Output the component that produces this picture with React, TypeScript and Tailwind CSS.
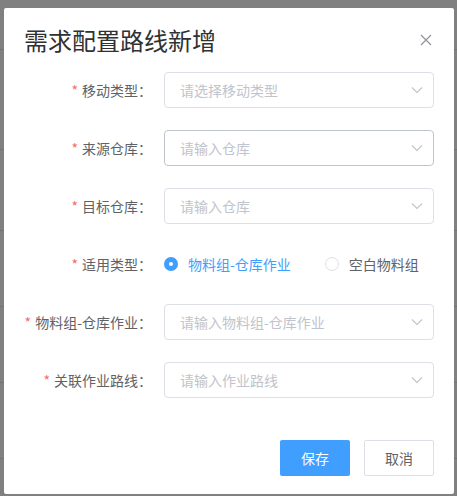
import React from "react";

const font = { fontFamily: '"Noto Sans CJK SC", "Noto Sans", sans-serif' };

function Chevron() {
  return (
    <svg width="12" height="8" viewBox="0 0 12 8" fill="none">
      <path d="M1 1.5 L6 6.5 L11 1.5" stroke="#c0c4cc" strokeWidth="1.1" />
    </svg>
  );
}

function Label({ text }: { text: string }) {
  return (
    <div className="w-[160px] shrink-0 pr-3 text-right text-[14px] leading-[36px] text-[#606266]">
      <span className="mr-[4px] text-[#f56c6c]">*</span>
      {text}：
    </div>
  );
}

function SelectRow({ label, placeholder, hover }: { label: string; placeholder: string; hover?: boolean }) {
  return (
    <div className="flex items-center">
      <Label text={label} />
      <div
        className={`flex h-[36px] w-[270px] items-center justify-between rounded-[4px] border bg-white pl-[15px] pr-[10px] ${
          hover ? "border-[#c0c4cc]" : "border-[#dcdfe6]"
        }`}
      >
        <span className="text-[14px] text-[#c0c4cc]">{placeholder}</span>
        <Chevron />
      </div>
    </div>
  );
}

export default function App() {
  return (
    <div className="relative h-[496px] w-[457px] overflow-hidden bg-[#808080]" style={font}>
      <div className="absolute inset-0 flex flex-col">
        <div className="mt-[49px] h-px bg-[#737373]" />
        <div className="mt-[99px] h-px bg-[#737373]" />
        <div className="mt-[80px] h-px bg-[#737373]" />
        <div className="mt-[75px] h-px bg-[#737373]" />
        <div className="mt-[75px] h-px bg-[#737373]" />
        <div className="mt-[75px] h-px bg-[#737373]" />
      </div>
      <div className="absolute left-[4px] top-[8px] h-[486px] w-[450px] rounded-[2px] bg-white">
        <div className="pl-[20px] pt-[18px] text-[24px] leading-[28px] text-[#303133]">需求配置路线新增</div>
        <div className="absolute right-[22px] top-[26px] text-[#909399]">
          <svg width="12" height="12" viewBox="0 0 12 12">
            <path d="M1 1 L11 11 M11 1 L1 11" stroke="#909399" strokeWidth="1.2" />
          </svg>
        </div>
        <div className="mt-[18px] flex flex-col gap-[22px]">
          <SelectRow label="移动类型" placeholder="请选择移动类型" />
          <SelectRow label="来源仓库" placeholder="请输入仓库" hover />
          <SelectRow label="目标仓库" placeholder="请输入仓库" />
          <div className="flex items-center">
            <Label text="适用类型" />
            <div className="flex items-center">
              <span className="flex h-[14px] w-[14px] items-center justify-center rounded-full bg-[#409eff]">
                <span className="h-[4px] w-[4px] rounded-full bg-white" />
              </span>
              <span className="ml-[10px] text-[14px] text-[#409eff]">物料组-仓库作业</span>
              <span className="ml-[34px] h-[14px] w-[14px] rounded-full border border-[#dcdfe6] bg-white" />
              <span className="ml-[10px] text-[14px] text-[#606266]">空白物料组</span>
            </div>
          </div>
          <SelectRow label="物料组-仓库作业" placeholder="请输入物料组-仓库作业" />
          <SelectRow label="关联作业路线" placeholder="请输入作业路线" />
        </div>
        <div className="mt-[42px] flex justify-end gap-[14px] pr-[20px]">
          <button className="h-[36px] w-[70px] rounded-[2px] bg-[#409eff] text-[14px] text-white">保存</button>
          <button className="h-[36px] w-[70px] rounded-[2px] border border-[#dcdfe6] bg-white text-[14px] text-[#606266]">
            取消
          </button>
        </div>
      </div>
    </div>
  );
}
